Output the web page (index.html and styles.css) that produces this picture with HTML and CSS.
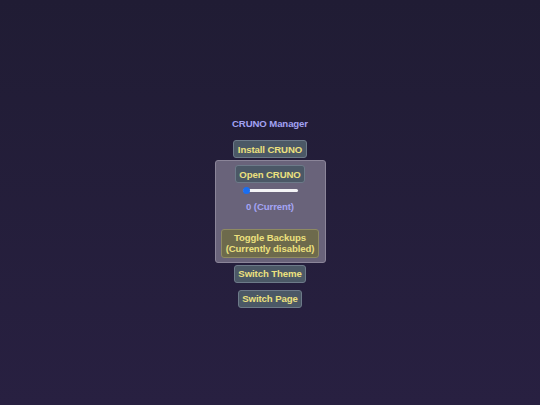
FILE: index.html
```html
<!DOCTYPE html>
<html lang="en">
<head>
<meta charset="utf-8">
<title>CRUNO Manager</title>
<link rel="stylesheet" href="styles.css">
</head>
<body>
<main class="app">
  <h1 class="title">CRUNO Manager</h1>
  <button class="btn btn-install">Install CRUNO</button>
  <section class="panel">
    <button class="btn">Open CRUNO</button>
    <div class="slider"><div class="track"></div><div class="thumb"></div></div>
    <div class="value">0 (Current)</div>
    <button class="btn btn-toggle">Toggle Backups<br>(Currently disabled)</button>
  </section>
  <button class="btn btn-theme">Switch Theme</button>
  <button class="btn btn-page">Switch Page</button>
</main>
</body>
</html>
```

FILE: styles.css
```css
html, body {
  margin: 0;
  padding: 0;
}
body {
  width: 540px;
  height: 405px;
  overflow: hidden;
  background: linear-gradient(180deg, #201c34 0%, #282041 100%);
  font-family: "Liberation Sans", Arial, sans-serif;
  font-weight: bold;
  font-size: 9.6px;
  letter-spacing: -0.1px;
}
.app {
  display: flex;
  flex-direction: column;
  align-items: center;
  padding-top: 118px;
}
.title {
  margin: 0;
  font-size: 9.6px;
  line-height: 12px;
  color: #a2a2f2;
  font-weight: bold;
}
.btn {
  font-family: inherit;
  font-weight: bold;
  font-size: 9.6px;
  letter-spacing: -0.1px;
  line-height: 11px;
  color: #ece07e;
  background: #4b5866;
  border: 1px solid #6d7a89;
  border-radius: 3px;
  padding: 2.5px 3.4px;
  margin: 0;
  white-space: nowrap;
  cursor: pointer;
}
.btn-install {
  margin-top: 10px;
}
.panel {
  margin-top: 2px;
  width: 111px;
  box-sizing: border-box;
  background: #69637a;
  border: 1px solid #8b8599;
  border-radius: 3px;
  padding: 4px 3px 4px;
  display: flex;
  flex-direction: column;
  align-items: center;
}
.slider {
  position: relative;
  width: 55px;
  height: 7px;
  margin-top: 4px;
}
.track {
  position: absolute;
  left: 0;
  right: 0;
  top: 2px;
  height: 3px;
  border-radius: 2px;
  background: #f4f4f6;
}
.thumb {
  position: absolute;
  left: 0;
  top: 0;
  width: 7px;
  height: 7px;
  border-radius: 50%;
  background: #1a6ef0;
}
.value {
  margin-top: 7.3px;
  line-height: 11px;
  color: #a4a4f4;
}
.btn-toggle {
  margin-top: 16.5px;
  padding: 2.5px 4px;
  background: #6d6a4c;
  border-color: #8e8a62;
}
.btn-theme {
  margin-top: 2px;
}
.btn-page {
  margin-top: 7px;
}
```
